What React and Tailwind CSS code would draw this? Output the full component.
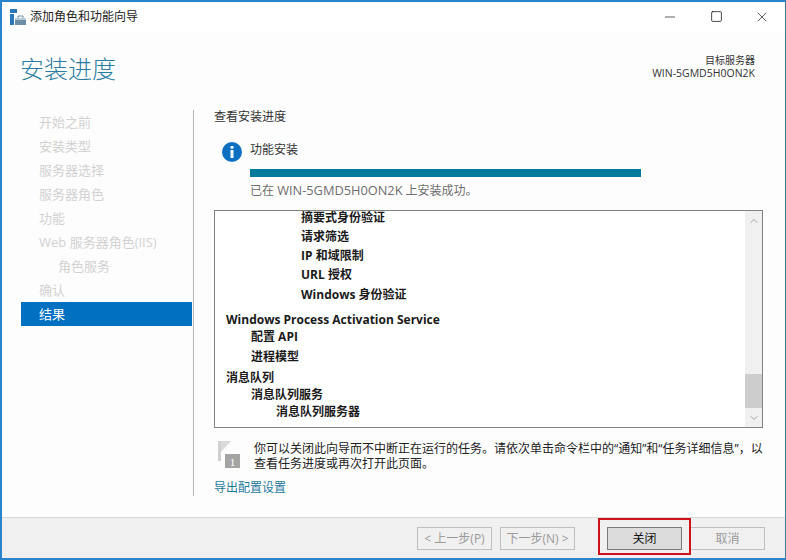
import { Minus, Square, X, ChevronUp, ChevronDown } from 'lucide-react';

const FONT = "font-['Open_Sans','Noto_Sans_CJK_SC',sans-serif]";

const STEPS = [
  { label: '开始之前' },
  { label: '安装类型' },
  { label: '服务器选择' },
  { label: '服务器角色' },
  { label: '功能' },
  { label: 'Web 服务器角色(IIS)' },
  { label: '角色服务', sub: true },
  { label: '确认' },
  { label: '结果', active: true },
];

function AppIcon() {
  return (
    <svg width="16" height="16" viewBox="0 0 16 16">
      <rect x="0" y="0" width="7" height="4" fill="#2b78b8" />
      <rect x="0" y="5" width="4" height="11" fill="#2b78b8" />
      <path d="M5 9h11v7H5z" fill="#6c8ea6" />
      <path d="M5 9h11v2H5z" fill="#b9cbd8" />
      <path d="M8 9V7h5v2" fill="none" stroke="#6c8ea6" />
    </svg>
  );
}

function InfoIcon() {
  return (
    <svg width="20" height="20" viewBox="0 0 20 20" className="shrink-0">
      <circle cx="10" cy="10" r="10" fill="#0b6fc2" />
      <rect x="8.5" y="8" width="3" height="8" fill="#fff" />
      <rect x="8.5" y="4" width="3" height="2.6" fill="#fff" />
    </svg>
  );
}

function FlagIcon() {
  return (
    <svg width="22" height="28" viewBox="0 0 22 28" className="shrink-0">
      <rect x="0" y="0" width="3" height="20" fill="#d0d0d0" />
      <path d="M3 0h10L3 11z" fill="#dadada" />
      <rect x="7" y="13" width="15" height="14" fill="#a4a4a4" />
      <text x="14.5" y="24.5" fontSize="11" fill="#fff" textAnchor="middle" fontFamily="Liberation Serif, serif">1</text>
    </svg>
  );
}

function TreeRow({ children, indent, className = '', h }) {
  return (
    <div className={`flex items-center font-bold text-[12px] leading-none text-[#1a1a1a] ${indent} ${h} ${className}`}>
      {children}
    </div>
  );
}

function FootButton({ children, primary }) {
  return (
    <div
      className={`w-[75px] h-[23px] flex items-center justify-center text-[12px] border ${
        primary ? 'bg-[#dcdcdc] border-[#7a7a7a] text-[#111]' : 'bg-[#f0f0f0] border-[#bfbfbf] text-[#9a9a9a]'
      }`}
    >
      {children}
    </div>
  );
}

export default function App() {
  return (
    <div className={`${FONT} w-[786px] h-[560px] flex flex-col bg-[#fdfdfd] border-l-2 border-t-2 border-b-2 border-r border-l-[#2b83c9] border-t-[#2b83c9] border-b-[#2b83c9] border-r-[#3b7f9f] overflow-hidden`}>
      {/* title bar */}
      <div className="h-[29px] shrink-0 flex items-center bg-white">
        <div className="ml-[8px] flex items-center gap-[4px]">
          <AppIcon />
          <span className="text-[12px] text-[#222]">添加角色和功能向导</span>
        </div>
        <div className="ml-auto flex items-center text-[#111]">
          <div className="w-[46px] h-[29px] flex items-center justify-center"><Minus size={16} strokeWidth={1} /></div>
          <div className="w-[46px] h-[29px] flex items-center justify-center"><Square size={13} strokeWidth={1.4} /></div>
          <div className="w-[46px] h-[29px] flex items-center justify-center"><X size={16} strokeWidth={1} /></div>
        </div>
      </div>

      {/* heading */}
      <div className="h-[79px] shrink-0 flex items-start justify-between pl-[18px] pr-[30px]">
        <div className="text-[24px] leading-none font-light text-[#2a7c9e] mt-[26px]">安装进度</div>
        <div className="text-right text-[10px] leading-[13px] text-[#333] mt-[23px]">
          <div>目标服务器</div>
          <div className="text-[10.5px]">WIN-5GMD5H0ON2K</div>
        </div>
      </div>

      {/* body */}
      <div className="flex-1 flex min-h-0">
        {/* step list */}
        <div className="w-[172px] ml-[19px] h-[385px] shrink-0 pt-[1px] border-r border-[#b4b4b4] box-content">
          {STEPS.map((s) => (
            <div
              key={s.label}
              className={`h-[24px] flex items-center text-[13px] ${s.sub ? 'pl-[37px]' : 'pl-[18px]'} ${
                s.active ? 'bg-[#0070c0] text-white mr-[1px] -mt-[1px] pt-[1px]' : 'text-[#d2d2d2]'
              }`}
            >
              {s.label}
            </div>
          ))}
        </div>

        {/* main */}
        <div className="flex-1 ml-[20px] mr-[23px] min-w-0 flex flex-col">
          <div className="text-[12px] leading-none text-[#333] mt-[1px]">查看安装进度</div>

          <div className="flex mt-[19px] ml-[8px] gap-[8px]">
            <InfoIcon />
            <div className="flex-1">
              <div className="text-[12px] leading-none text-[#333] mt-[2px]">功能安装</div>
              <div className="w-[391px] h-[8px] mt-[13px] bg-[#007b9c]" />
              <div className="text-[12px] leading-none text-[#6e6e6e] mt-[7px]">
                已在 <span className="text-[12.8px]">WIN-5GMD5H0ON2K</span> 上安装成功。
              </div>
            </div>
          </div>

          {/* result list */}
          <div className="mt-[13px] w-[549px] h-[218px] shrink-0 border border-[#828282] bg-white flex">
            <div className="flex-1 pt-[1px] overflow-hidden">
              <TreeRow indent="pl-[86px]" h="h-[12px]">摘要式身份验证</TreeRow>
              <TreeRow indent="pl-[86px]" h="h-[19px]" className="mt-[3px]">请求筛选</TreeRow>
              <TreeRow indent="pl-[86px]" h="h-[19px]">IP 和域限制</TreeRow>
              <TreeRow indent="pl-[86px]" h="h-[20px]">URL 授权</TreeRow>
              <TreeRow indent="pl-[86px]" h="h-[19px]">Windows 身份验证</TreeRow>
              <TreeRow indent="pl-[11px]" h="h-[16px]" className="mt-[8px]">Windows Process Activation Service</TreeRow>
              <TreeRow indent="pl-[36px]" h="h-[18px]">配置 API</TreeRow>
              <TreeRow indent="pl-[36px]" h="h-[21px]">进程模型</TreeRow>
              <TreeRow indent="pl-[11px]" h="h-[16px]" className="mt-[3px]">消息队列</TreeRow>
              <TreeRow indent="pl-[36px]" h="h-[17px]">消息队列服务</TreeRow>
              <TreeRow indent="pl-[61px]" h="h-[17px]">消息队列服务器</TreeRow>
            </div>
            <div className="w-[17px] shrink-0 bg-[#f0f0f0] flex flex-col items-center text-[#a6a6a6]">
              <ChevronUp size={12} strokeWidth={2} className="mt-[4px]" />
              <div className="w-full h-[34px] bg-[#cdcdcd] mt-[147px]" />
              <ChevronDown size={12} strokeWidth={2} className="mt-[4px]" />
            </div>
          </div>

          {/* note */}
          <div className="flex h-[29px] mt-[13px] ml-[4px]">
            <FlagIcon />
            <div className="ml-[14px] text-[12px] leading-[15px] text-[#222] whitespace-nowrap">
              你可以关闭此向导而不中断正在运行的任务。请依次单击命令栏中的“通知”和“任务详细信息”，以
              <br />
              查看任务进度或再次打开此页面。
            </div>
          </div>

          <div className="text-[12px] leading-none text-[#1d7a9c] mt-[12px]">导出配置设置</div>
        </div>
      </div>

      {/* footer */}
      <div className="h-[41px] shrink-0 bg-[#f0f0f0] border-t border-[#d9d9d9] flex items-start pt-[9px] pl-[415px]">
        <FootButton>&lt; 上一步(P)</FootButton>
        <div className="ml-[8px]"><FootButton>下一步(N) &gt;</FootButton></div>
        <div className="relative ml-[32px]">
          <FootButton primary>关闭</FootButton>
          <div className="absolute -left-[9px] -top-[9px] w-[93px] h-[37px] border-2 border-[#d0101a]" />
        </div>
        <div className="ml-[8px]"><FootButton>取消</FootButton></div>
      </div>
    </div>
  );
}
